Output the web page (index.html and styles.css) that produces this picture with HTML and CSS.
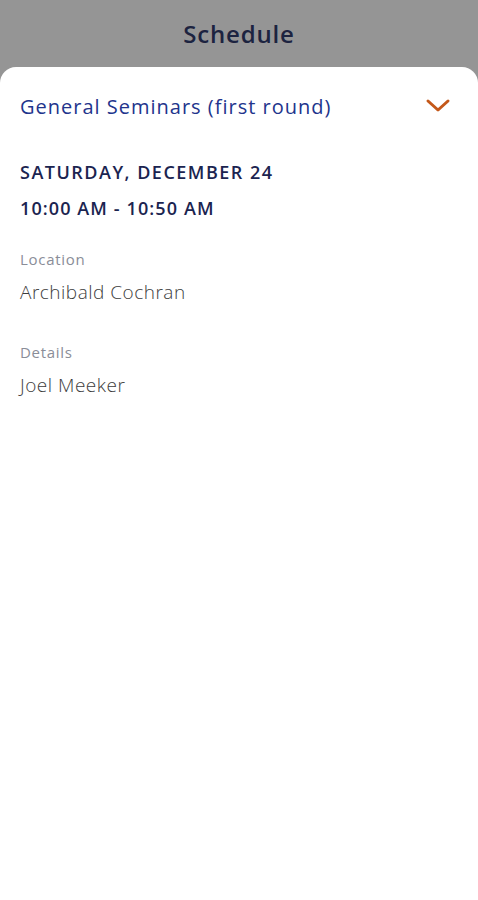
FILE: index.html
```html
<!DOCTYPE html>
<html lang="en">
<head>
  <meta charset="UTF-8" />
  <title>Schedule</title>
  <link rel="stylesheet" href="styles.css">
</head>
<body>
  <div id="header">
    <h1>Schedule</h1>
  </div>

  <div id="sheet">
    <div class="sheet-top">
      <h2>General Seminars (first round)</h2>
      <svg class="chevron" width="26" height="16" viewBox="0 0 26 16">
        <path d="M3 3 L13 12 L23 3" fill="none" stroke="#c4581a" stroke-width="3" stroke-linecap="round" stroke-linejoin="round"/>
      </svg>
    </div>

    <p class="date">SATURDAY, DECEMBER 24</p>
    <p class="time">10:00 AM - 10:50 AM</p>

    <div class="field">
      <div class="label">Location</div>
      <div class="value">Archibald Cochran</div>
    </div>
    <div class="field">
      <div class="label">Details</div>
      <div class="value">Joel Meeker</div>
    </div>
  </div>
</body>
</html>
```

FILE: styles.css
```css
body {
  margin: 0;
  background: #959595;
  font-family: "Open Sans", "Noto Sans", sans-serif;
  height: 900px;
  display: flex;
  flex-direction: column;
}
#header {
  height: 67px;
  display: flex;
  align-items: center;
  justify-content: center;
}
#header h1 {
  margin: 0;
  font-size: 24px;
  font-weight: 600;
  color: #1c2340;
  letter-spacing: 0.8px;
}
#sheet {
  flex-grow: 1;
  background: #fff;
  border-radius: 16px 16px 0 0;
  padding: 0 20px;
}
.sheet-top {
  display: flex;
  justify-content: space-between;
  align-items: center;
  height: 78px;
}
.sheet-top h2 {
  margin: 0;
  font-size: 20px;
  font-weight: 500;
  color: #22348c;
  letter-spacing: 1px;
}
.chevron {
  margin-right: 7px;
}
.date, .time {
  margin: 0;
  font-size: 18px;
  line-height: 24px;
  font-weight: 600;
  color: #1b2450;
}
.date {
  margin-top: 15px;
  letter-spacing: 1.5px;
}
.time {
  margin-top: 12px;
  letter-spacing: 1.1px;
}
.field {
  margin-top: 29px;
}
.field + .field {
  margin-top: 37px;
}
.label {
  font-size: 15px;
  line-height: 20px;
  letter-spacing: 0.7px;
  color: #8a8d98;
}
.value {
  margin-top: 10px;
  font-size: 19px;
  line-height: 26px;
  font-weight: 300;
  letter-spacing: 0.5px;
  color: #3c3c3c;
}
```
